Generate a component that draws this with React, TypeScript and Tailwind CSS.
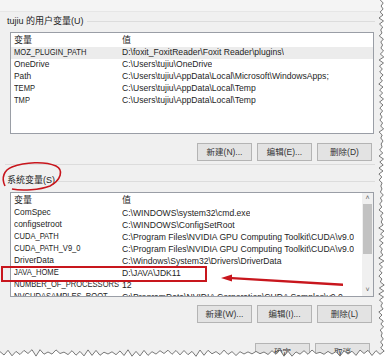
import React from "react";

const userRows: [string, string][] = [
  ["MOZ_PLUGIN_PATH", "D:\\foxit_FoxitReader\\Foxit Reader\\plugins\\"],
  ["OneDrive", "C:\\Users\\tujiu\\OneDrive"],
  ["Path", "C:\\Users\\tujiu\\AppData\\Local\\Microsoft\\WindowsApps;"],
  ["TEMP", "C:\\Users\\tujiu\\AppData\\Local\\Temp"],
  ["TMP", "C:\\Users\\tujiu\\AppData\\Local\\Temp"],
];

const sysRows: [string, string][] = [
  ["ComSpec", "C:\\WINDOWS\\system32\\cmd.exe"],
  ["configsetroot", "C:\\WINDOWS\\ConfigSetRoot"],
  ["CUDA_PATH", "C:\\Program Files\\NVIDIA GPU Computing Toolkit\\CUDA\\v9.0"],
  ["CUDA_PATH_V9_0", "C:\\Program Files\\NVIDIA GPU Computing Toolkit\\CUDA\\v9.0"],
  ["DriverData", "C:\\Windows\\System32\\Drivers\\DriverData"],
  ["JAVA_HOME", "D:\\JAVA\\JDK11"],
  ["NUMBER_OF_PROCESSORS", "12"],
  ["NVCUDASAMPLES_ROOT", "C:\\ProgramData\\NVIDIA Corporation\\CUDA Samples\\v9.0"],
];

const font = { fontFamily: '"Liberation Sans", "Noto Sans CJK SC", sans-serif' };

function Row({ name, value, selected }: { name: string; value: string; selected?: boolean }) {
  const caps = name === name.toUpperCase();
  return (
    <div className={`flex h-[12px] items-center whitespace-nowrap ${selected ? "bg-[#ececec]" : ""}`}>
      <div className="w-[111px] shrink-0 pl-[3px]">
        <span className={caps ? "inline-block origin-left scale-x-[0.84]" : "inline-block origin-left scale-x-[0.93]"}>
          {name}
        </span>
      </div>
      <div className="overflow-hidden text-[8.6px]">{value}</div>
    </div>
  );
}

function Btn({ label }: { label: string }) {
  return (
    <div className="flex h-[18px] w-[55px] items-center justify-center border border-[#b4b4b4] bg-[#e3e3e3] text-[8.5px] text-[#333]">
      {label}
    </div>
  );
}

function rnd(i: number) {
  const x = Math.sin(i * 12.9898 + 7.1) * 43758.5453;
  return x - Math.floor(x);
}

function Torn() {
  const right: [number, number][] = [];
  for (let i = 0, y = 0; y <= 351; i++, y += 3) {
    right.push([381.5 + (i % 2 ? 1.5 : -1.5) + (rnd(i) - 0.5) * 2.5, y]);
  }
  const bottom: [number, number][] = [];
  for (let i = 0, x = 384; x >= 0; i++, x -= 4) {
    bottom.push([x, 353 + (i % 2 ? 1.8 : -1.8) + (rnd(i + 200) - 0.5) * 3]);
  }
  const pts = [...right, ...bottom];
  const edge = pts.map((p, i) => `${i ? "L" : "M"}${p[0].toFixed(1)} ${p[1].toFixed(1)}`).join(" ");
  const fill = `M387 0 ${edge.replace(/^M/, "L")} L0 361 L387 361 Z`;
  return (
    <svg className="pointer-events-none absolute left-0 top-0" width="387" height="361">
      <path d={fill} fill="#ffffff" />
      <path d={edge} fill="none" stroke="#6a6a6a" strokeWidth="0.9" />
    </svg>
  );
}

function Annot() {
  return (
    <svg className="pointer-events-none absolute left-0 top-0" width="387" height="361">
      <path
        d="M5 186 C1 178 4 170 12 167 C25 162 45 161 56 166 C64 170 61 180 50 186 C40 190 22 191 12 189"
        fill="none"
        stroke="#c8161d"
        strokeWidth="1.6"
      />
      <rect x="2" y="267" width="204" height="14" fill="none" stroke="#c8161d" strokeWidth="2" />
      <path d="M343 283.5 L232 277 L232 274.5 L221 278 L232 281.5 L232 279.2 L343 286 Z" fill="#c8161d" />
    </svg>
  );
}

export default function App() {
  return (
    <div className="relative h-[361px] w-[387px] overflow-hidden bg-white text-[9px] text-[#1e1e1e]" style={font}>
      <div className="flex h-[361px] w-[383px] flex-col bg-[#f0f0f0]">
        <div className="h-[12px] border-b border-[#e6e6e6] bg-[#f4f4f4]" />
        <div className="mt-[1px] flex h-[18px] items-center pl-[7px]">
          <span className="whitespace-nowrap">tujiu 的用户变量(U)</span>
          <div className="ml-[3px] mr-[8px] h-px flex-1 bg-[#dcdcdc]" />
        </div>
        <div className="ml-[10px] mt-[1px] h-[103px] w-[364px] border border-[#9a9ea6] bg-white pt-[2px]">
          <div className="flex h-[12px] items-center">
            <div className="w-[111px] pl-[3px]">变量</div>
            <div>值</div>
          </div>
          {userRows.map((r, i) => (
            <Row key={r[0]} name={r[0]} value={r[1]} selected={i === 0} />
          ))}
        </div>
        <div className="ml-[197px] mt-[9px] flex gap-[5px]">
          <Btn label="新建(N)..." />
          <Btn label="编辑(E)..." />
          <Btn label="删除(D)" />
        </div>
        <div className="ml-[5px] mr-[8px] mt-[3px] h-px bg-[#dcdcdc]" />
        <div className="mt-[9px] flex h-[14px] items-center pl-[7px]">
          <span className="whitespace-nowrap">系统变量(S)</span>
          <div className="ml-[3px] mr-[8px] h-px flex-1 bg-[#dcdcdc]" />
        </div>
        <div className="ml-[10px] mt-[4px] flex h-[105px] w-[364px] border border-[#9a9ea6] bg-white">
          <div className="flex-1 overflow-hidden pt-[2px]">
            <div className="flex h-[12px] items-center">
              <div className="w-[111px] pl-[3px]">变量</div>
              <div>值</div>
            </div>
            {sysRows.map((r) => (
              <Row key={r[0]} name={r[0]} value={r[1]} />
            ))}
          </div>
          <div className="flex w-[11px] flex-col bg-[#f0f0f0]">
            <div className="flex h-[11px] items-center justify-center text-[7px] text-[#606060]">˄</div>
            <div className="mx-[1px] h-[50px] bg-[#c2c2c2]" />
            <div className="flex-1" />
            <div className="flex h-[11px] items-center justify-center text-[7px] text-[#606060]">˅</div>
          </div>
        </div>
        <div className="ml-[197px] mt-[8px] flex gap-[5px]">
          <Btn label="新建(W)..." />
          <Btn label="编辑(I)..." />
          <Btn label="删除(L)" />
        </div>
        <div className="ml-[255px] mt-[20px] flex gap-[5px]">
          <Btn label="确定" />
          <Btn label="取消" />
        </div>
      </div>
      <Annot />
      <Torn />
    </div>
  );
}
